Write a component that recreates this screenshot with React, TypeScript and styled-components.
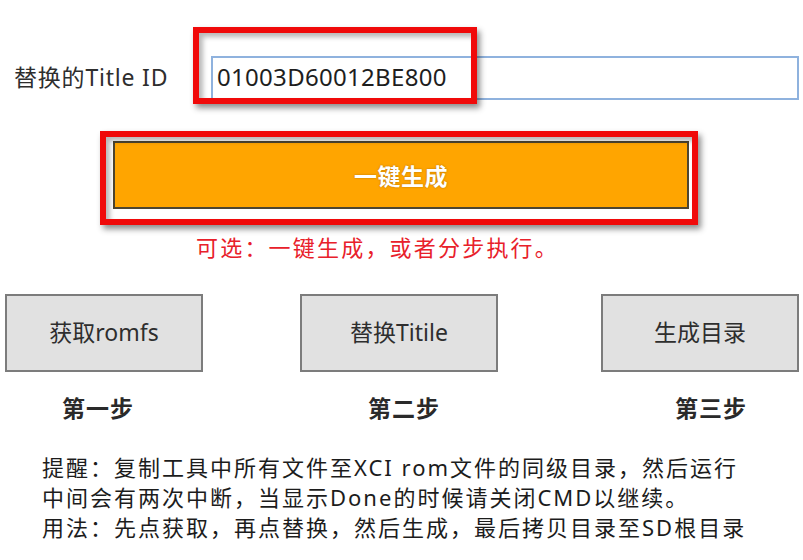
import React from "react";
import styled, { createGlobalStyle } from "styled-components";

const GlobalStyle = createGlobalStyle`
  html, body {
    margin: 0;
    padding: 0;
    background: #ffffff;
  }
  body {
    font-family: "Noto Sans", "Noto Sans CJK SC", sans-serif;
    color: #2b2b2b;
  }
`;

const Page = styled.div`
  width: 803px;
  height: 560px;
  overflow: hidden;
  display: flex;
  flex-direction: column;
  background: #ffffff;
`;

const IdRow = styled.div`
  display: flex;
  align-items: center;
  margin-top: 56px;
  padding-left: 14px;
  padding-right: 4px;
  height: 44px;
`;

const Label = styled.label`
  font-size: 23px;
  letter-spacing: 0.8px;
  color: #2e2e2e;
  width: 197px;
  flex: none;
  white-space: nowrap;
  margin-top: -5px;
`;

const InputWrap = styled.div`
  position: relative;
  flex: 1;
  height: 100%;
`;

const Input = styled.input`
  box-sizing: border-box;
  width: 100%;
  height: 100%;
  border: 2px solid #8fb2de;
  padding: 0 4px 4px;
  font-family: "Noto Sans", "Noto Sans CJK SC", sans-serif;
  font-size: 24px;
  letter-spacing: 0.3px;
  color: #1e1e1e;
  background: #fff;
  outline: none;
`;

const Highlight = styled.div<{ $l: number; $t: number; $w: number; $h: number }>`
  position: absolute;
  left: ${(p) => p.$l}px;
  top: ${(p) => p.$t}px;
  width: ${(p) => p.$w}px;
  height: ${(p) => p.$h}px;
  box-sizing: border-box;
  border: 6px solid #f00a0a;
  box-shadow: 3px 4px 6px rgba(0, 0, 0, 0.45),
    inset 4px 4px 5px rgba(0, 0, 0, 0.28);
  pointer-events: none;
`;

const GenerateRow = styled.div`
  position: relative;
  margin-top: 41px;
  margin-left: 113px;
  width: 576px;
  height: 68px;
`;

const GenerateButton = styled.button`
  box-sizing: border-box;
  width: 100%;
  height: 100%;
  background: #ffa500;
  border: 2px solid #4d4530;
  color: #ffffff;
  font-family: "Noto Sans", "Noto Sans CJK SC", sans-serif;
  font-size: 23px;
  font-weight: 700;
  letter-spacing: 0.5px;
  text-shadow: 0 0 2px rgba(120, 70, 0, 0.6);
  cursor: pointer;
`;

const Hint = styled.div`
  margin-top: 23px;
  padding-left: 196px;
  line-height: 30px;
  font-size: 22px;
  letter-spacing: 2.2px;
  color: #e8202a;
  white-space: nowrap;
`;

const Steps = styled.div`
  display: flex;
  margin-top: 32px;
`;

const Step = styled.div<{ $ml: number }>`
  display: flex;
  flex-direction: column;
  width: 198px;
  margin-left: ${(p) => p.$ml}px;
`;

const StepButton = styled.button`
  box-sizing: border-box;
  width: 198px;
  height: 78px;
  background: #e1e1e1;
  border: 2px solid #7c7c7c;
  font-family: "Noto Sans", "Noto Sans CJK SC", sans-serif;
  font-size: 23px;
  color: #2e2e2e;
  padding: 0 0 4px;
  cursor: pointer;
`;

const StepLabel = styled.div<{ $offset: number }>`
  margin-top: 21px;
  margin-left: ${(p) => p.$offset}px;
  line-height: 30px;
  font-size: 23px;
  font-weight: 700;
  letter-spacing: 1px;
  color: #2a2a2a;
  white-space: nowrap;
`;

const Notes = styled.div`
  margin-top: 29px;
  padding-left: 42px;
  display: flex;
  flex-direction: column;
`;

const NoteLine = styled.div`
  line-height: 30px;
  font-size: 22px;
  letter-spacing: 2px;
  color: #1c1c1c;
  white-space: nowrap;
`;

const steps = [
  { button: "获取romfs", label: "第一步", offset: 57, ml: 5 },
  { button: "替换Titile", label: "第二步", offset: 68, ml: 97 },
  { button: "生成目录", label: "第三步", offset: 74, ml: 103 },
];

const notes = [
  "提醒：复制工具中所有文件至XCI rom文件的同级目录，然后运行",
  "中间会有两次中断，当显示Done的时候请关闭CMD以继续。",
  "用法：先点获取，再点替换，然后生成，最后拷贝目录至SD根目录",
];

export default function App() {
  return (
    <>
      <GlobalStyle />
      <Page>
        <IdRow>
          <Label htmlFor="titleId">替换的Title ID</Label>
          <InputWrap>
            <Input id="titleId" defaultValue="01003D60012BE800" />
            <Highlight $l={-18} $t={-29} $w={284} $h={77} />
          </InputWrap>
        </IdRow>
        <GenerateRow>
          <GenerateButton>一键生成</GenerateButton>
          <Highlight $l={-13} $t={-10} $w={598} $h={94} />
        </GenerateRow>
        <Hint>可选：一键生成，或者分步执行。</Hint>
        <Steps>
          {steps.map((s) => (
            <Step key={s.label} $ml={s.ml}>
              <StepButton>{s.button}</StepButton>
              <StepLabel $offset={s.offset}>{s.label}</StepLabel>
            </Step>
          ))}
        </Steps>
        <Notes>
          {notes.map((n) => (
            <NoteLine key={n}>{n}</NoteLine>
          ))}
        </Notes>
      </Page>
    </>
  );
}
